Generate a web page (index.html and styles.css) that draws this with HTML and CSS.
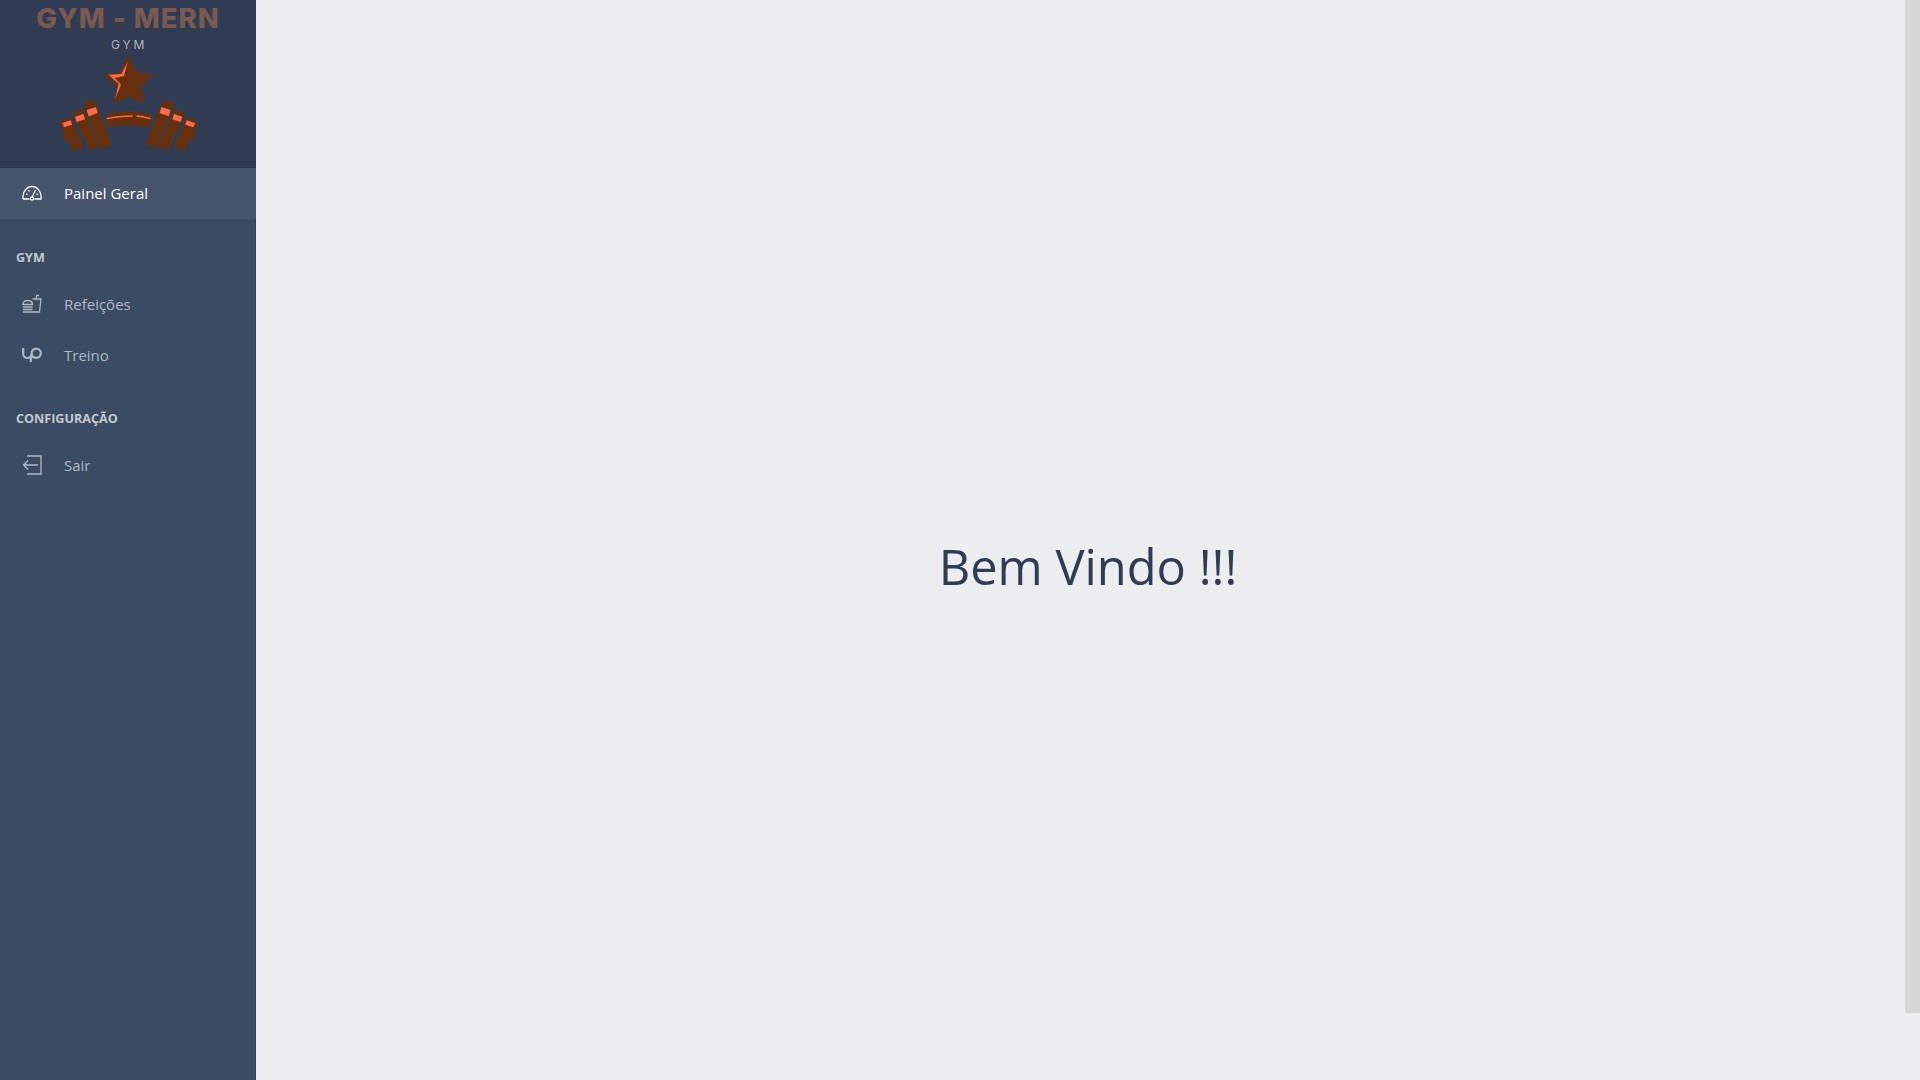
FILE: index.html
```html
<!DOCTYPE html>
<html lang="en">
<head>
    <meta charset="UTF-8">
    <title>Gym - Mern</title>
    <link rel="stylesheet" href="styles.css">
</head>
<body>

    <div class="layout">
        <aside class="sidebar">
            <div class="brand">
                <div class="brand-name">GYM - MERN</div>
                <div class="brand-sub">GYM</div>
                <!-- logo drawn on a 3x grid -->
                <svg class="brand-logo" viewBox="0 0 480 330" width="160" height="110">
                    <defs>
                        <g id="plates">
                            <polygon class="logo-dark" points="98,158 133,147 186,283 151,297"/>
                            <polygon class="logo-dark" points="64,188 100,175 148,290 118,300"/>
                            <polygon class="logo-dark" points="29,212 63,201 101,292 68,304 55,272 43,274"/>
                            <polygon class="logo-light" points="110,180 138,171 143,189 116,199"/>
                            <polygon class="logo-light" points="75,200 100,192 105,208 80,216"/>
                            <polygon class="logo-light" points="37,219 62,211 66,224 42,232"/>
                        </g>
                    </defs>
                    <polygon class="logo-dark" points="235,14 264,66 313,72 274,110 284,163 238,140 189,163 200,110 159,72 208,66"/>
                    <polygon class="logo-light" points="233,36 214,72 176,74 206,102 195,148 213,104 194,84 222,78"/>
                    <use href="#plates"/>
                    <use href="#plates" transform="translate(472 0) scale(-1 1)"/>
                    <path class="logo-dark" d="M165 192 Q236 176 308 192 L300 232 Q236 220 172 232 Z"/>
                    <path class="logo-line" d="M170 206 Q205 198 248 198"/>
                    <path class="logo-line" d="M260 198 Q282 200 302 206"/>
                </svg>
            </div>

            <nav class="nav">
                <a class="nav-link active">
                    <svg class="nav-icon" viewBox="0 0 20 15">
                        <path d="M1 13.5 C0.2 6.5 4.5 1 10 1 C15.5 1 19.8 6.5 19 13.5 H12.5 M7.5 13.5 H1"/>
                        <path d="M4 8.5 L5.5 9.2 M6.5 4.5 L7.5 6 M13.5 4.5 L12.8 5.7 M16 8.5 L14.5 9.2"/>
                        <path d="M10 12 L13 5.5"/>
                        <circle cx="10" cy="13" r="1.6"/>
                    </svg>
                    <span>Painel Geral</span>
                </a>

                <div class="nav-title">GYM</div>
                <a class="nav-link">
                    <svg class="nav-icon" viewBox="0 0 20 18">
                        <path d="M10.5 4 H19 L17.5 17 H1"/>
                        <path d="M14 4 L14.7 0.5 H17"/>
                        <path d="M1 9.5 C1 6.5 3.5 5.5 5.5 5.5 C8 5.5 10.5 6.5 10.5 9.5 Z"/>
                        <path d="M1 12 H10.5 M1 14.5 H10.5"/>
                    </svg>
                    <span>Refeições</span>
                </a>
                <a class="nav-link">
                    <svg class="nav-icon nav-icon-bold" viewBox="0 0 20 15">
                        <path d="M1.2 0.5 V6 C1.2 12 9.6 12 9.6 6 C9.6 3.2 11.6 1.2 14.2 1.2 C16.8 1.2 18.8 3.2 18.8 5.8 C18.8 8.4 16.8 10.4 14.2 10.4 C11.6 10.4 9.6 8.4 9.6 6 L8.6 14.5"/>
                    </svg>
                    <span>Treino</span>
                </a>

                <div class="nav-title">CONFIGURAÇÃO</div>
                <a class="nav-link">
                    <svg class="nav-icon" viewBox="0 0 20 20">
                        <path d="M5 1 H19 V19 H5"/>
                        <path d="M16 10 H1.5 M6 5.5 L1.5 10 L6 14.5"/>
                    </svg>
                    <span>Sair</span>
                </a>
            </nav>
        </aside>

        <main class="content">
            <h1 class="welcome">Bem Vindo !!!</h1>
        </main>
    </div>

    <div class="scroll-thumb"></div>

</body>
</html>
```

FILE: styles.css
```css
body {
    margin: 0;
    height: 1080px;
    overflow: hidden;
    font-family: "Open Sans", "Noto Sans", sans-serif;
    background-color: #ebedef;
    color: #2f3c54;
}
.layout {
    display: flex;
    height: 1080px;
}
.sidebar {
    width: 256px;
    flex-shrink: 0;
    background-color: #3c4b64;
    box-shadow: inset -1px 0 0 #33415a;
}
.brand {
    height: 168px;
    box-sizing: border-box;
    background-color: #303c54;
    border-bottom: 1px solid #2b3750;
    display: flex;
    flex-direction: column;
    align-items: center;
    overflow: hidden;
}
.brand-name {
    font-family: Inter, sans-serif;
    font-weight: 800;
    font-size: 27.5px;
    line-height: 37px;
    letter-spacing: 1px;
    color: #7a5a50;
}
.brand-sub {
    font-family: Inter, sans-serif;
    font-size: 12px;
    line-height: 16px;
    letter-spacing: 2.8px;
    padding-left: 2px;
    color: #b3b2b8;
}
.brand-logo {
    display: block;
    margin-top: -3px;
    margin-left: 4px;
    flex-shrink: 0;
}
.logo-dark {
    fill: #66300f;
    stroke: #24465f;
    stroke-width: 1.5;
}
.logo-light {
    fill: #ff6b4a;
}
.logo-line {
    fill: none;
    stroke: #ff6b4a;
    stroke-width: 4;
}
.nav {
    display: flex;
    flex-direction: column;
}
.nav-link {
    display: flex;
    align-items: center;
    box-sizing: border-box;
    height: 51px;
    padding-left: 22px;
    padding-bottom: 1px;
    font-size: 15px;
    color: #b1b7c1;
}
.nav-link.active {
    margin-bottom: 1px;
    background-color: #46546c;
    color: #fff;
}
.nav-icon {
    width: 20px;
    height: 20px;
    margin-right: 22px;
    flex-shrink: 0;
    fill: none;
    stroke: #b1b7c1;
    stroke-width: 1.3;
}
.nav-icon-bold {
    stroke-width: 2.2;
}
.active .nav-icon {
    stroke: #fff;
}
.nav-title {
    margin-top: 16px;
    padding: 12px 16px;
    font-size: 12.6px;
    line-height: 19px;
    font-weight: 700;
    color: #c3c8d0;
}
.content {
    flex: 1;
    box-sizing: border-box;
    padding-top: 52px;
    display: flex;
    align-items: center;
    justify-content: center;
}
.welcome {
    margin: 0;
    font-size: 48.8px;
    font-weight: 400;
    color: #2f3c54;
}
.scroll-thumb {
    position: absolute;
    top: 0;
    right: 0;
    width: 15px;
    height: 1013px;
    background-color: #d6d6d6;
}
```
